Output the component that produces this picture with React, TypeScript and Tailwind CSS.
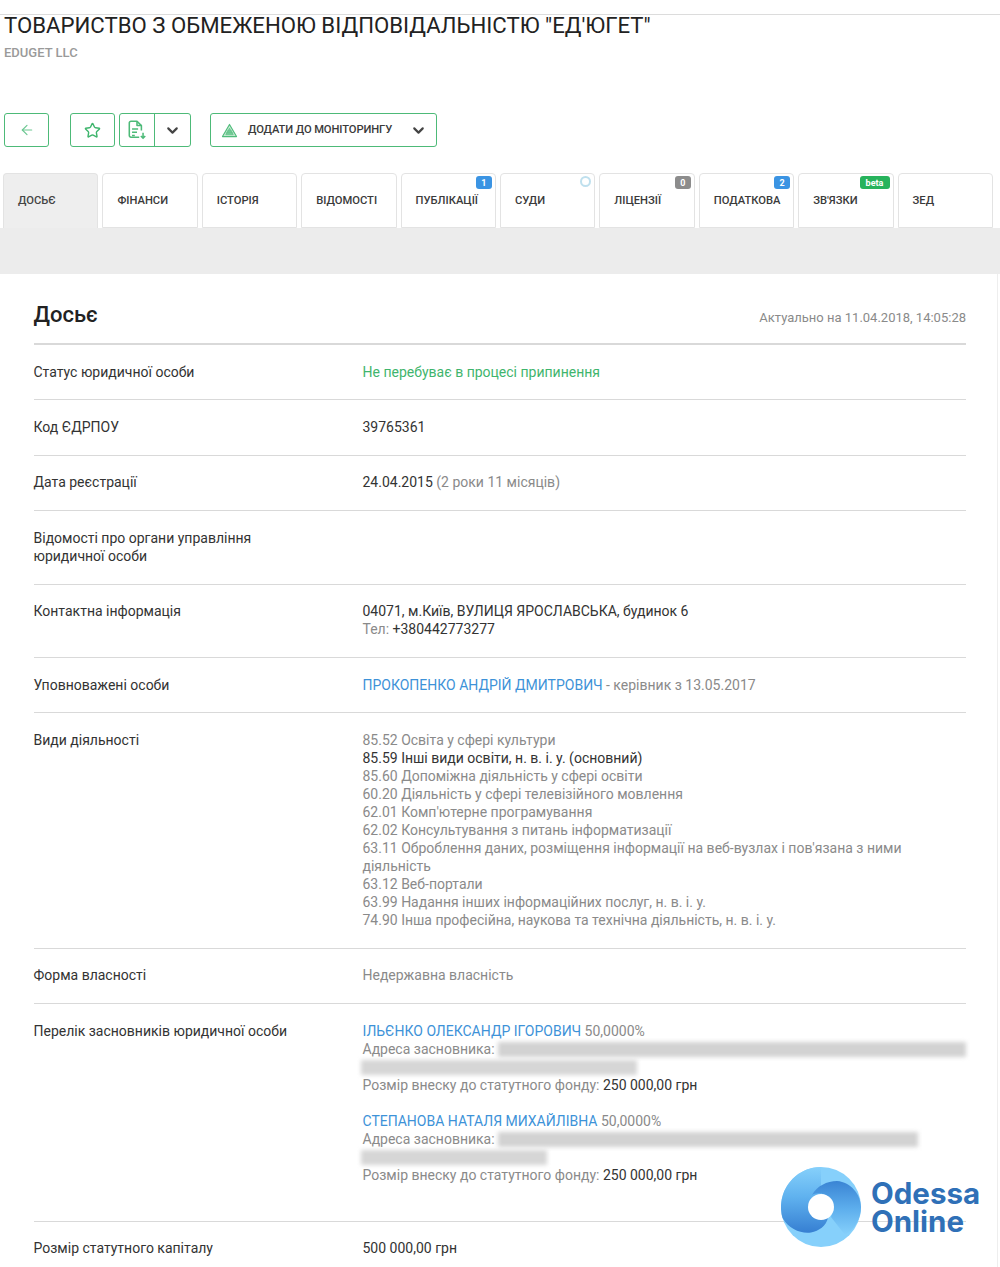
import type { ReactNode } from 'react'
import { ArrowLeft, ChevronDown, Star } from 'lucide-react'

const tabs = [
  { label: 'Досьє', active: true },
  { label: 'Фінанси' },
  { label: 'Історія' },
  { label: 'Відомості' },
  { label: 'Публікації', badge: '1', badgeClass: 'bg-[#3b94e3] right-[3px] w-4' },
  { label: 'Суди', spinner: true },
  { label: 'Ліцензії', badge: '0', badgeClass: 'bg-[#8c8c8c] right-[3px] w-4' },
  { label: 'Податкова', badge: '2', badgeClass: 'bg-[#3b94e3] right-[3px] w-4' },
  { label: "Зв'язки", badge: 'beta', badgeClass: 'bg-[#27b35c] right-[3px] w-[30px]' },
  { label: 'ЗЕД' },
]

const activities = [
  '85.52 Освіта у сфері культури',
  '85.59 Інші види освіти, н. в. і. у. (основний)',
  '85.60 Допоміжна діяльність у сфері освіти',
  '60.20 Діяльність у сфері телевізійного мовлення',
  "62.01 Комп'ютерне програмування",
  '62.02 Консультування з питань інформатизації',
  "63.11 Оброблення даних, розміщення інформації на веб-вузлах і пов'язана з ними діяльність",
  '63.12 Веб-портали',
  '63.99 Надання інших інформаційних послуг, н. в. і. у.',
  '74.90 Інша професійна, наукова та технічна діяльність, н. в. і. у.',
]

function Row({ label, children, className = 'pb-[18.7px] pt-[17.7px]' }: { label: ReactNode; children?: ReactNode; className?: string }) {
  return (
    <div className={`flex border-b border-[#d9d9d9] ${className}`}>
      <div className="w-[329px] shrink-0 pr-[60px] text-[#333]">{label}</div>
      <div className="flex-1">{children}</div>
    </div>
  )
}

function Founder({ name, share, blur1, blur2 }: { name: string; share: string; blur1: string; blur2: string }) {
  return (
    <div>
      <div>
        <span className="text-[#3d92d8]">{name}</span> <span className="text-[#8a8a8a]">{share}</span>
      </div>
      <div className="flex items-center text-[#8a8a8a]">
        <span className="shrink-0 whitespace-pre">Адреса засновника: </span>
        <span className={`h-[15px] bg-[#d2d2d2] blur-[2px] ${blur1}`} />
      </div>
      <div className="flex h-[18px] items-center">
        <span className={`h-[15px] bg-[#d6d6d6] blur-[2px] ${blur2}`} />
      </div>
      <div className="text-[#8a8a8a]">
        Розмір внеску до статутного фонду: <span className="text-[#333]">250 000,00 грн</span>
      </div>
    </div>
  )
}

function ActionButton({ children, className = '' }: { children: ReactNode; className?: string }) {
  return (
    <div className={`flex h-[34px] items-center justify-center rounded-[3px] border-[1.5px] border-[#4dba78] bg-white ${className}`}>
      {children}
    </div>
  )
}

export default function App() {
  return (
    <div
      className="h-[1267px] w-[1000px] overflow-hidden bg-white text-[14px] leading-[18px]"
      style={{ fontFamily: 'Roboto, "Liberation Sans", sans-serif' }}
    >
      <div className="h-[15px] border-b border-[#dcdcdc]" />
      <div className="px-[4px]">
        <h1 className="h-[24px] text-[22.2px] leading-[20px] text-[#222]">ТОВАРИСТВО З ОБМЕЖЕНОЮ ВІДПОВІДАЛЬНІСТЮ "ЕД'ЮГЕТ"</h1>
        <div className="mt-[6px] text-[13px] leading-[16px] font-medium text-[#9a9a9a]">EDUGET LLC</div>
      </div>

      <div className="mt-[52px] flex items-center pl-[4px]">
        <ActionButton className="w-[45px]">
          <ArrowLeft size={16} className="text-[#6cc792]" strokeWidth={1.75} />
        </ActionButton>
        <ActionButton className="ml-[21px] w-[45px]">
          <Star size={17} className="text-[#3fb56d]" strokeWidth={2} />
        </ActionButton>
        <ActionButton className="ml-[4px] w-[72px] !justify-start">
          <div className="flex h-full w-[35px] items-center justify-center border-r-[1.5px] border-[#4dba78]">
            <svg width="22" height="22" viewBox="0 0 20 20" fill="none" stroke="#4dba78" strokeWidth="1.4">
              <path d="M12 16.5H4.5C3.7 16.5 3 15.8 3 15V3.5C3 2.7 3.7 2 4.5 2H10L14 6V10.5" strokeLinejoin="round" />
              <path d="M10 2V6H14" strokeLinejoin="round" />
              <path d="M5.5 9H11M5.5 12H10M5.5 15H8" />
              <path d="M15.5 12.5V17.5M13.5 15.5L15.5 17.5L17.5 15.5" />
            </svg>
          </div>
          <div className="flex flex-1 items-center justify-center">
            <ChevronDown size={17} className="text-[#444]" strokeWidth={3} />
          </div>
        </ActionButton>
        <ActionButton className="ml-[19px] w-[227px] !justify-start pl-[10px]">
          <svg width="17" height="15" viewBox="0 0 18 16" fill="none" stroke="#4fbb7a" strokeWidth="1.2">
            <path d="M9 1.5L16.5 14.5H1.5Z" strokeLinejoin="round" fill="#c6ead4" />
            <path d="M9 5.5L13 12.5H5Z" fill="#7fd0a0" strokeWidth="0.6" />
            <path d="M5 10.5H13M6 8.5H12" strokeWidth="0.7" />
          </svg>
          <span className="ml-[10px] text-[11.2px] leading-[16px] font-medium tracking-[-0.1px] text-[#3a3a3a]">ДОДАТИ ДО МОНІТОРИНГУ</span>
          <ChevronDown size={17} className="ml-auto mr-[9px] text-[#444]" strokeWidth={3} />
        </ActionButton>
      </div>

      <div className="mt-[26px] flex gap-[4px] pl-[3px]">
        {tabs.map((tab) => (
          <div
            key={tab.label}
            className={`relative flex h-[55px] w-[95.4px] items-center rounded-t-[4px] border border-[#e3e3e3] pl-[14px] text-[11.2px] font-medium uppercase ${
              tab.active ? 'border-b-0 bg-[#eeeeee] text-[#444]' : 'bg-white text-[#3a3a3a]'
            }`}
          >
            {tab.label}
            {tab.badge && (
              <span className={`absolute top-[2px] flex h-[13px] items-center justify-center rounded-[3px] text-[9px] font-bold normal-case text-white ${tab.badgeClass}`}>
                {tab.badge}
              </span>
            )}
            {tab.spinner && <span className="absolute right-[3px] top-[2px] h-[11px] w-[11px] rounded-full border-2 border-[#bfe0ee]" />}
          </div>
        ))}
      </div>

      <div className="h-[46px] bg-[#ececec]" />

      <div className="ml-[3px] mr-[2px] border-r border-[#eeeeee] bg-white pl-[30.5px] pr-[31px]">
        <div className="flex items-end justify-between border-b-2 border-[#d9d9d9] pb-[14px] pt-[27px]">
          <h2 className="text-[22px] leading-[28px] font-medium text-[#222]">Досьє</h2>
          <span className="mb-[2px] text-[13px] text-[#8a8a8a]">Актуально на 11.04.2018, 14:05:28</span>
        </div>

        <Row label="Статус юридичної особи">
          <span className="text-[#3fb56d]">Не перебуває в процесі припинення</span>
        </Row>
        <Row label="Код ЄДРПОУ">
          <span className="text-[#333]">39765361</span>
        </Row>
        <Row label="Дата реєстрації">
          <span className="text-[#333]">24.04.2015</span> <span className="text-[#8a8a8a]">(2 роки 11 місяців)</span>
        </Row>
        <Row label="Відомості про органи управління юридичної особи" />
        <Row label="Контактна інформація">
          <div className="text-[#333]">04071, м.Київ, ВУЛИЦЯ ЯРОСЛАВСЬКА, будинок 6</div>
          <div className="text-[#8a8a8a]">
            Тел: <span className="text-[#333]">+380442773277</span>
          </div>
        </Row>
        <Row label="Уповноважені особи">
          <span className="text-[#3d92d8]">ПРОКОПЕНКО АНДРІЙ ДМИТРОВИЧ</span> <span className="text-[#8a8a8a]">- керівник з 13.05.2017</span>
        </Row>
        <Row label="Види діяльності">
          {activities.map((a, i) => (
            <div key={a} className={i === 1 ? 'text-[#333]' : 'text-[#8a8a8a]'}>
              {a}
            </div>
          ))}
        </Row>
        <Row label="Форма власності">
          <span className="text-[#8a8a8a]">Недержавна власність</span>
        </Row>
        <Row label="Перелік засновників юридичної особи" className="pb-[37px] pt-[18px]">
          <div className="flex flex-col gap-[18px]">
            <Founder name="ІЛЬЄНКО ОЛЕКСАНДР ІГОРОВИЧ" share="50,0000%" blur1="w-[468px]" blur2="w-[276px] -ml-[2px]" />
            <Founder name="СТЕПАНОВА НАТАЛЯ МИХАЙЛІВНА" share="50,0000%" blur1="w-[420px]" blur2="w-[186px] -ml-[2px]" />
          </div>
        </Row>
        <div className="flex pb-[18px] pt-[17px]">
          <div className="w-[329px] shrink-0 text-[#333]">Розмір статутного капіталу</div>
          <div className="text-[#333]">500 000,00 грн</div>
        </div>
      </div>

      <div className="absolute left-[781px] top-[1167px] flex items-center">
        <svg width="80" height="80" viewBox="0 0 80 80">
          <defs>
            <linearGradient id="lobe" x1="0" y1="0" x2="0" y2="1">
              <stop offset="0" stopColor="#86d0fb" />
              <stop offset="0.45" stopColor="#60b2ef" />
              <stop offset="1" stopColor="#367fd2" />
            </linearGradient>
            <linearGradient id="crescent" x1="0" y1="0" x2="0" y2="1">
              <stop offset="0" stopColor="#3a84d4" />
              <stop offset="0.5" stopColor="#5cadec" />
              <stop offset="1" stopColor="#86d0fb" />
            </linearGradient>
          </defs>
          <circle cx="40" cy="40" r="40" fill="#86d0fb" />
          <path d="M40 0A40 40 0 0 0 1.5 51C8 62 20 67 30 65.5C38 64 45 59 47 51L40 27Z" fill="url(#lobe)" />
          <path d="M31 28C36 19 46 14 56 14C70 15 80 28 80 40C80 52 74 62 64 68L50 50C54 40 50 28 40 26.5C36 26 33 27 31 28Z" fill="url(#crescent)" />
          <circle cx="40" cy="40" r="13" fill="#fff" />
        </svg>
        <div
          className="ml-[10px] text-[29.5px] leading-[28px] font-bold text-[#2f70b7]"
          style={{ fontFamily: 'Inter, Roboto, sans-serif' }}
        >
          <div>Odessa</div>
          <div>Online</div>
        </div>
      </div>
    </div>
  )
}
